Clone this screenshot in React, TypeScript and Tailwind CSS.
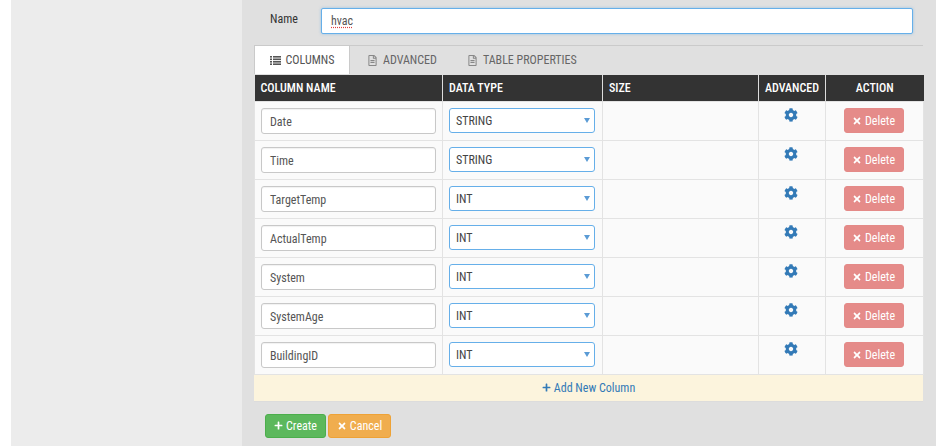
import { FaCog, FaPlus, FaRegFileAlt, FaTimes } from "react-icons/fa";

interface ColumnRow {
  name: string;
  type: string;
}

const rows: ColumnRow[] = [
  { name: "Date", type: "STRING" },
  { name: "Time", type: "STRING" },
  { name: "TargetTemp", type: "INT" },
  { name: "ActualTemp", type: "INT" },
  { name: "System", type: "INT" },
  { name: "SystemAge", type: "INT" },
  { name: "BuildingID", type: "INT" },
];

function ListIcon() {
  return (
    <svg width="11" height="9" viewBox="0 0 11 9" className="fill-[#555]">
      <rect x="0" y="0" width="2" height="1.6" />
      <rect x="3" y="0" width="8" height="1.6" />
      <rect x="0" y="2.5" width="2" height="1.6" />
      <rect x="3" y="2.5" width="8" height="1.6" />
      <rect x="0" y="5" width="2" height="1.6" />
      <rect x="3" y="5" width="8" height="1.6" />
      <rect x="0" y="7.4" width="2" height="1.6" />
      <rect x="3" y="7.4" width="8" height="1.6" />
    </svg>
  );
}

function Row({ name, type }: ColumnRow) {
  return (
    <tr className="h-[39px] bg-[#fafafa]">
      <td className="border border-[#e3e3e3] px-[6px] align-middle">
        <div className="mt-px flex h-[26px] items-center rounded-[3px] border border-[#c8c8c8] bg-white pl-[8px] pt-[2px] text-[12px] text-[#555] shadow-[inset_0_1px_1px_rgba(0,0,0,0.06)]">
          {name}
        </div>
      </td>
      <td className="border border-[#e3e3e3] pl-[6px] pr-[7px] align-middle">
        <div className="flex h-[25px] items-center justify-between rounded-[3px] border border-[#66afe9] bg-white pl-[6px] pr-[4px] text-[12px] text-[#444]">
          <span>{type}</span>
          <span className="h-0 w-0 border-x-[3px] border-t-[5px] border-x-transparent border-t-[#5b9bd5]" />
        </div>
      </td>
      <td className="border border-[#e3e3e3]" />
      <td className="border border-[#e3e3e3] pb-[11px] pr-[2px] align-middle">
        <FaCog className="mx-auto text-[14px] text-[#337ab7]" />
      </td>
      <td className="border border-[#e3e3e3] pr-[2px] align-middle">
        <button className="mx-auto flex h-[25px] w-[60px] items-center justify-center gap-[3px] rounded-[3px] border border-[#e48a88] bg-[#e58b89] text-[12px] text-white">
          <FaTimes className="text-[10px]" />
          Delete
        </button>
      </td>
    </tr>
  );
}

export default function App() {
  return (
    <div className="flex h-[446px] overflow-hidden bg-white px-[11px] font-['Roboto',sans-serif] [font-stretch:87%]">
      <div className="w-[231px] bg-[#ececec]" />
      <div className="w-[694px] bg-[#e0e0e0] pl-[12px] pr-[13px]">
        {/* Name */}
        <div className="flex items-center pt-[8px]">
          <label className="w-[67px] pb-[4px] pl-[16px] text-[12px] text-[#333]">Name</label>
          <div className="flex h-[26px] w-[592px] items-center rounded-[2px] border border-[#66afe9] bg-white pl-[9px] text-[12px] text-[#555] shadow-[0_0_3px_rgba(102,175,233,0.6)]">
            <span className="underline decoration-[#e04040] decoration-dotted underline-offset-2">hvac</span>
          </div>
        </div>

        {/* Tabs */}
        <div className="mt-[11px] flex h-[30px] border-t border-[#cacaca] pb-px text-[12px] text-[#666]">
          <div className="flex w-[96px] items-center justify-center gap-[5px] border-x border-[#cacaca] bg-white text-[#555]">
            <ListIcon />
            COLUMNS
          </div>
          <div className="flex items-center gap-[5px] pl-[17px]">
            <FaRegFileAlt className="text-[11px] text-[#888]" />
            ADVANCED
          </div>
          <div className="flex items-center gap-[5px] pl-[30px]">
            <FaRegFileAlt className="text-[11px] text-[#888]" />
            TABLE PROPERTIES
          </div>
        </div>

        {/* Columns table */}
        <table className="w-[669px] table-fixed border-collapse">
          <colgroup>
            <col className="w-[188px]" />
            <col className="w-[160px]" />
            <col className="w-[156px]" />
            <col className="w-[67px]" />
            <col className="w-[98px]" />
          </colgroup>
          <thead>
            <tr className="h-[26px] bg-[#333] text-[12px] text-white">
              <th className="border-r border-[#ddd] pl-[6px] text-left font-medium">COLUMN NAME</th>
              <th className="border-r border-[#ddd] pl-[6px] text-left font-medium">DATA TYPE</th>
              <th className="border-r border-[#ddd] pl-[6px] text-left font-medium">SIZE</th>
              <th className="border-r border-[#ddd] text-center font-medium">ADVANCED</th>
              <th className="text-center font-medium">ACTION</th>
            </tr>
          </thead>
          <tbody>
            {rows.map((row) => (
              <Row key={row.name} name={row.name} type={row.type} />
            ))}
          </tbody>
        </table>
        <div className="flex h-[27px] w-[669px] items-center justify-center gap-[3px] border-b border-[#dcdcdc] bg-[#fcf4dd] text-[12px] text-[#337ab7]">
          <FaPlus className="text-[9px]" />
          Add New Column
        </div>

        {/* Actions */}
        <div className="mt-[12px] flex gap-[2px] pl-[11px]">
          <button className="flex h-[24px] w-[61px] items-center justify-center gap-[3px] rounded-[3px] border border-[#4cae4c] bg-[#5cb85c] text-[12px] text-white">
            <FaPlus className="text-[9px]" />
            Create
          </button>
          <button className="flex h-[24px] w-[63px] items-center justify-center gap-[3px] rounded-[3px] border border-[#eea236] bg-[#f0ad4e] text-[12px] text-white">
            <FaTimes className="text-[10px]" />
            Cancel
          </button>
        </div>
      </div>
    </div>
  );
}
